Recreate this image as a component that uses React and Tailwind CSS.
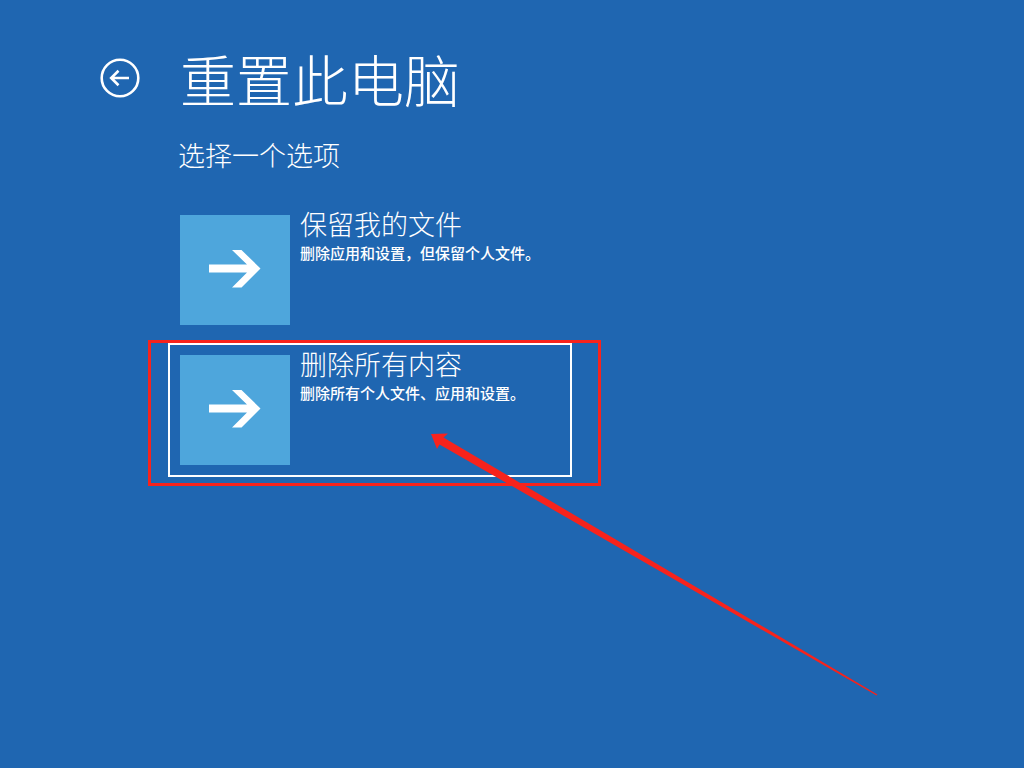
import React from "react";

const FONT = "font-['Noto_Sans_CJK_SC','Noto_Sans',sans-serif]";

function BackIcon() {
  return (
    <svg width="40" height="40" viewBox="0 0 40 40" fill="none" stroke="white">
      <circle cx="20" cy="20" r="18.3" strokeWidth="2.6" />
      <path d="M29 20H11.5M18.5 12.8L11.2 20l7.3 7.2" strokeWidth="2.6" />
    </svg>
  );
}

function TileArrow() {
  return (
    <svg width="110" height="110" viewBox="0 0 110 110">
      <polygon
        fill="white"
        points="29,49.5 67,49.5 52,35 61.5,35 80.5,53.5 61.5,72.5 52,72.5 67,57.5 29,57.5"
      />
    </svg>
  );
}

function Option({ title, desc, focused, children }) {
  return (
    <div
      className={
        "relative flex gap-[10px] p-[10px] border-2 " +
        (focused ? "border-white" : "border-transparent")
      }
    >
      <div className="w-[110px] h-[110px] shrink-0 bg-[#4ea6dc]">
        <TileArrow />
      </div>
      <div className="-mt-[8px]">
        <div className="text-[27px] leading-[34px] font-light">{title}</div>
        <div className="text-[15px] leading-[20px] font-medium mt-[2px]">{desc}</div>
      </div>
      {children}
    </div>
  );
}

export default function App() {
  return (
    <div className={"relative min-h-screen w-full overflow-hidden bg-[#1f66b1] text-white " + FONT}>
      <div className="pl-[100px] pt-[40px]">
        <div className="flex items-center gap-[40px]">
          <BackIcon />
          <h1 className="text-[56px] leading-[76px] font-light">重置此电脑</h1>
        </div>
        <div className="pl-[78px] mt-[21px] text-[27px] leading-[36px] font-light">选择一个选项</div>
        <div className="ml-[68px] mt-[30px] w-[404px] flex flex-col gap-[6px]">
          <Option title="保留我的文件" desc="删除应用和设置，但保留个人文件。" />
          <Option title="删除所有内容" desc="删除所有个人文件、应用和设置。" focused>
            <div className="absolute -left-[22px] -top-[5px] w-[453px] h-[146px] border-[3px] border-[#f7231c] pointer-events-none" />
          </Option>
        </div>
      </div>
      <svg className="absolute inset-0 pointer-events-none" width="1024" height="768">
        <polygon
          fill="#f7231c"
          points="431,434 448,433.5 443.5,437.5 877.4,694.4 876.6,695.6 439.5,444.5 437,449"
        />
      </svg>
    </div>
  );
}
